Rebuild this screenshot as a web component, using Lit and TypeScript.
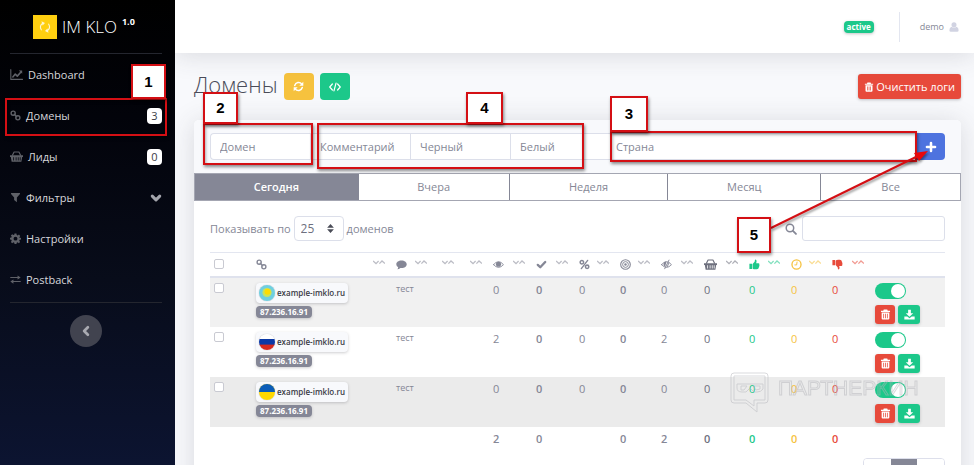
import { LitElement, html, css, svg, nothing } from "lit";
import { customElement, state } from "lit/decorators.js";
import { classMap } from "lit/directives/class-map.js";
import { styleMap } from "lit/directives/style-map.js";

const line = (d: string, w = 1.5) =>
  svg`<path d=${d} fill="none" stroke="currentColor" stroke-width=${w} stroke-linecap="round" stroke-linejoin="round"/>`;
const fill = (d: string) => svg`<path d=${d} fill="currentColor" fill-rule="evenodd"/>`;

const glyphs: Record<string, unknown> = {
  chart: svg`${line("M1 2V14H15.5", 1.3)}${line("M3.5 11L6.5 7.5L9 10L13.5 5", 2)}${fill("M10.8 3H15V7.2Z")}`,
  link: svg`<circle cx="4.6" cy="4.6" r="3" fill="none" stroke="currentColor" stroke-width="2"/><circle cx="11.4" cy="11.4" r="3" fill="none" stroke="currentColor" stroke-width="2"/>${line("M6.2 6.2L9.8 9.8", 2)}`,
  basket: svg`${fill("M0 6.5H16V8.5H15L14 14.5H2L1 8.5H0ZM4 9V13H5V9ZM7 9V13H8V9ZM9.6 9V13H10.6V9ZM12 9V13H13V9Z")}${line("M3 6.5L5 2.5H11L13 6.5", 1.4)}`,
  filter: fill("M1.5 1.5H14.5V3L10 8V14.8L6 11.5V8L1.5 3Z"),
  gear: svg`${fill("M6.6 .8H9.4L9.8 2.9L11.2 3.5L13 2.3L14.9 4.2L13.7 6L14.2 7.2L16 7V9.6L14 9.9L13.4 11.2L14.7 13L12.8 14.9L11 13.6L9.8 14.1L9.4 16H6.6L6.2 14.1L5 13.6L3.2 14.9L1.3 13L2.5 11.2L2 9.9L0 9.6V7L2 6.6L2.5 5.4L1.3 3.7L3.2 1.8L5 3L6.2 2.6ZM8 5.4A2.8 2.8 0 1 0 8 11A2.8 2.8 0 1 0 8 5.4Z")}`,
  swap: svg`${line("M1 5H12M15 11H4", 1.6)}${fill("M11 2L15.5 5L11 8ZM5 8L.5 11L5 14Z")}`,
  down: line("M3 5.5L8 10.5L13 5.5", 4),
  left: line("M10.5 3L5.5 8L10.5 13", 3.6),
  refresh: svg`${line("M2.5 6.5A5.8 5.8 0 0 1 12.8 4.6M13.5 9.5A5.8 5.8 0 0 1 3.2 11.4", 2.2)}${fill("M15 1.2V7H9.2ZM1 14.8V9H6.8Z")}`,
  cycle: svg`${line("M3.8 11.2C2 8.6 2.6 5.6 5 4M12.2 4.8C14 7.4 13.4 10.4 11 12", 1.3)}${fill("M4 1.4L8 3.4L5.2 6.4ZM12 14.6L8 12.6L10.8 9.6Z")}`,
  code: line("M4.5 4L1 8L4.5 12M11.5 4L15 8L11.5 12M9.4 2.8L6.6 13.2", 1.6),
  trash: fill("M5.5 .8H10.5L11.3 2.6H14.6V4.4H1.4V2.6H4.7ZM2.4 5.2H13.6V13.8Q13.6 15.4 12 15.4H4Q2.4 15.4 2.4 13.8ZM4.8 7V13.4H5.9V7ZM7.5 7V13.4H8.6V7ZM10.1 7V13.4H11.2V7Z"),
  download: fill("M6 1H10V6H13.4L8 11.4L2.6 6H6ZM.5 11H4.8L8 13.6L11.2 11H15.5V15.2H.5Z"),
  plus: line("M8 2.6V13.4M2.6 8H13.4", 3.4),
  user: fill("M8 .5A4 4 0 0 1 8 8.6A4 4 0 0 1 8 .5ZM4 7.6Q8 11 12 7.6Q15.4 8.6 15.4 13Q15.4 15.5 13 15.5H3Q.6 15.5 .6 13Q.6 8.6 4 7.6Z"),
  comment: fill("M8 2C12.4 2 15.6 4.4 15.6 7.6S12.4 13.2 8 13.2L6.4 13.1Q4.6 14.8 1.8 15Q3 13.8 3.2 12Q.4 10.4 .4 7.6C.4 4.4 3.6 2 8 2Z"),
  eye: svg`${line("M.8 8.2Q8 -.6 15.2 8.2Q8 16.4 .8 8.2Z", 1.3)}<circle cx="8" cy="7.6" r="3.7" fill="currentColor"/>`,
  eyeoff: svg`${line("M.8 8.2Q8 -.6 15.2 8.2Q8 16.4 .8 8.2Z", 1.3)}<path d="M8 3.9A3.7 3.7 0 0 0 6 11Z" fill="currentColor"/>${line("M11.6 1.6L5.4 14.2M11.4 6L9 11.4", 1.4)}`,
  check: line("M2.6 8.6L6.2 12L13.4 4.4", 3.4),
  percent: svg`<circle cx="4.2" cy="4.6" r="2.5" fill="none" stroke="currentColor" stroke-width="2.2"/><circle cx="11.8" cy="11.4" r="2.5" fill="none" stroke="currentColor" stroke-width="2.2"/>${line("M12.6 2L3.4 14", 2)}`,
  target: svg`<circle cx="8" cy="8" r="7" fill="none" stroke="currentColor" stroke-width="1.6"/><circle cx="8" cy="8" r="4.2" fill="none" stroke="currentColor" stroke-width="1.4"/><circle cx="8" cy="8" r="1.8" fill="currentColor"/>`,
  up: fill("M.6 7H4.4V14.6H.6ZM5.2 7.2L8.2 4L8.8 .8Q11.4 .8 11 3.6L10.4 6H14Q15.6 6.4 15 8.4Q15.6 9.4 14.8 10.4Q15 11.6 14.2 12.4Q14.2 15 11.4 15H9Q7 14.8 5.2 14Z"),
  clock: svg`<circle cx="8" cy="8" r="6.6" fill="none" stroke="currentColor" stroke-width="1.9"/>${line("M8.8 4.4L8.2 8.6H5.6", 1.4)}`,
  thumbdown: fill("M.6 9H4.4V1.4H.6ZM5.2 8.8L8.2 12L8.8 15.2Q11.4 15.2 11 12.4L10.4 10H14Q15.6 9.6 15 7.6Q15.6 6.6 14.8 5.6Q15 4.4 14.2 3.6Q14.2 1 11.4 1H9Q7 1.2 5.2 2Z"),
  search: svg`<circle cx="6.6" cy="6.6" r="5" fill="none" stroke="currentColor" stroke-width="2"/>${line("M10.6 10.6L14.6 14.6", 2.4)}`,
  updown: fill("M8 0L14 6.8H2ZM8 16L2 9.2H14Z"),
};

const icon = (name: string, size = 12) =>
  html`<svg class="icon" viewBox="0 0 16 16" width=${size} height=${size} aria-hidden="true">${glyphs[name]}</svg>`;

const flags: Record<string, unknown> = {
  kz: svg`<rect width="16" height="16" fill="#6fcfe0"/><circle cx="8" cy="7.5" r="4.6" fill="#c9e35c"/><circle cx="8.5" cy="6.8" r="3" fill="#ffdc00"/>`,
  ru: svg`<rect width="16" height="16" fill="#fff"/><rect y="5" width="16" height="6" fill="#0b39a6"/><rect y="10.6" width="16" height="6" fill="#d62a1e"/>`,
  ua: svg`<rect width="16" height="16" fill="#ffd800"/><rect width="16" height="8" fill="#0a5cb8"/>`,
};

interface Column {
  w: number;
  icon?: string;
  sort?: boolean;
  tone?: string;
  label: string;
}

const columns: Column[] = [
  { w: 36, label: "" },
  { w: 140, icon: "link", sort: true, label: "Домен" },
  { w: 42, icon: "comment", sort: true, label: "Комментарий" },
  { w: 27, sort: true, label: "Черный" },
  { w: 28, sort: true, label: "Белый" },
  { w: 43, icon: "eye", sort: true, label: "Просмотры" },
  { w: 43, icon: "check", sort: true, tone: "strong", label: "Пропущено" },
  { w: 41, icon: "percent", sort: true, label: "Процент" },
  { w: 41, icon: "target", sort: true, tone: "strong", label: "Цели" },
  { w: 43, icon: "eyeoff", sort: true, label: "Скрыто" },
  { w: 45, icon: "basket", sort: true, tone: "dark", label: "Лиды" },
  { w: 42, icon: "up", sort: true, tone: "green", label: "Принято" },
  { w: 41, icon: "clock", sort: true, tone: "amber", label: "Ожидание" },
  { w: 43, icon: "thumbdown", sort: true, tone: "red", label: "Отклонено" },
  { w: 80, label: "" },
];

const rows = [
  { flag: "kz", values: [0, 0, 0, 0, 0, 0, 0, 0, 0] },
  { flag: "ru", values: [2, 0, 0, 0, 2, 0, 0, 0, 0] },
  { flag: "ua", values: [0, 0, 0, 0, 0, 0, 0, 0, 0] },
];
const totals = ["2", "0", "", "0", "2", "0", "0", "0", "0"];

const menu = [
  { icon: "chart", text: "Dashboard" },
  { icon: "link", text: "Домены", count: 3 },
  { icon: "basket", text: "Лиды", count: 0 },
  { icon: "filter", text: "Фильтры", more: true },
  { icon: "gear", text: "Настройки" },
  { icon: "swap", text: "Postback" },
];

/* Tour marks: x, y, width, height of the numbered tag and of the area it names */
const marks = [
  { n: 1, tag: [131, 64, 35, 35], area: [5, 98, 162, 38] },
  { n: 2, tag: [203, 92, 35, 32], area: [203, 123, 110, 42] },
  { n: 3, tag: [610, 96, 38, 36], area: [610, 131, 307, 31] },
  { n: 4, tag: [466, 92, 37, 32], area: [317, 123, 267, 46] },
  { n: 5, tag: [737, 217, 34, 36] },
];

const box = ([x, y, w, h]: number[]) =>
  styleMap({ left: `${x}px`, top: `${y}px`, width: `${w}px`, height: `${h}px` });

@customElement("app-root")
export class AppRoot extends LitElement {
  @state() private period = 0;

  static styles = css`
    :host {
      display: block;
      position: relative;
      height: 100vh;
      overflow: hidden;
      font-family: "Open Sans", "Noto Sans", sans-serif;
      font-size: 11px;
      line-height: 16px;
      color: #858796;
    }
    * { box-sizing: border-box; }
    button, input, select { font: inherit; color: inherit; margin: 0; }
    button { border: 0; padding: 0; cursor: pointer; display: inline-flex; align-items: center; justify-content: center; }
    a { color: inherit; text-decoration: none; }
    .icon { display: block; flex: none; }
    .app { display: flex; height: 100%; }

    .side {
      flex: none; width: 175px; padding: 0 13px 0 10px;
      background: linear-gradient(#000 0%, #02030a 25%, #080c1a 60%, #0c1431 100%);
      color: #d6d7db;
    }
    .brand { display: flex; align-items: center; height: 53px; padding-left: 23px; gap: 5px; color: #fff; font-size: 17px; font-weight: 300; }
    .logo { display: grid; place-items: center; width: 24px; height: 24px; background: #ffcf10; color: #fff6d0; }
    .ver { font-size: 9px; font-weight: 700; line-height: 10px; align-self: flex-start; margin-top: 17px; }
    .menu { list-style: none; margin: 0; padding: 0 0 2px; border: solid #24262f; border-width: 1px 0; }
    .item { display: flex; align-items: center; gap: 5px; height: 41px; }
    .item .icon { color: #5f6168; }
    .item .more .icon { color: #a3a5ac; }
    .item .more { margin-left: auto; }
    .count { margin-left: auto; min-width: 15px; height: 16px; border-radius: 4px; background: #fff; color: #3a3b45; text-align: center; }
    .fold { display: flex; margin: 12px auto 0; width: 32px; height: 32px; border-radius: 50%; background: #41434f; color: #a9aab1; }

    .main { flex: 1; min-width: 0; background: #f8f9fc; overflow: hidden; }
    .top {
      position: relative; display: flex; align-items: center; justify-content: flex-end; height: 53px; padding-right: 15px;
      background: #fff; box-shadow: 0 2px 26px rgba(58, 59, 69, 0.17); font-size: 9px;
    }
    .active { padding: 0 3px; height: 12px; line-height: 12px; font-size: 8px; border-radius: 4px; background: #1cc88a; color: #fff; font-weight: 700; box-shadow: 0 1px 3px rgba(58, 59, 69, 0.3); }
    .rule { width: 1px; height: 30px; margin: 0 20px 0 25px; background: #e3e6f0; }
    .who { display: flex; align-items: center; gap: 5px; }
    .who .icon { color: #d1d3e2; }
    .body { padding: 20px 13px 0 19px; }
    .head { display: flex; align-items: center; height: 27px; margin-bottom: 20px; }
    h1 { margin: 0 6px 0 0; font-size: 22px; line-height: 24px; height: 30px; font-weight: 300; color: #4a4c59; }
    .sq { width: 30px; height: 27px; border-radius: 4px; color: #fff; margin-right: 6px; }
    .amberbg { background: #f6c23e; }
    .greenbg { background: #1cc88a; }
    .redbg { background: #e74a3b; }
    .clear { margin-left: auto; height: 25px; padding: 0 6px; gap: 2px; border-radius: 3px; color: #fff; box-shadow: 0 1px 3px rgba(58, 59, 69, 0.3); }

    .card { background: #fff; border-radius: 5px; box-shadow: 0 2px 26px rgba(58, 59, 69, 0.17); padding-bottom: 16px; }
    .add { display: grid; grid-template-columns: repeat(4, 100fr) 306fr 29px; padding: 13px 16px; height: 53px; background: #f8f9fc; border-radius: 5px 5px 0 0; }
    .add input, .find input, .per select { min-width: 0; border: 1px solid #dcdfea; background: #fff; outline: 0; }
    .add input { width: 100%; height: 27px; padding: 0 9px; border-right-width: 0; border-radius: 0; }
    .add input:first-child { border-radius: 4px 0 0 4px; }
    .add .country { padding: 0 5px; }
    .add button { background: #4e73df; color: #fff; border-radius: 0 4px 4px 0; height: 27px; }
    input::placeholder { color: #858796; opacity: 1; }
    .tabs { display: grid; grid-template-columns: 163fr 151fr 159fr 153fr 140fr; border: 1px solid #a4a6b2; }
    .tabs button { min-width: 0; height: 26px; background: #fff; border-left: 1px solid #858796; }
    .tabs button:first-child { border-left: 0; }
    .tabs .on { background: #858796; color: #fff; font-weight: 600; }
    .inner { padding: 15px 16px 0; }
    .tools { display: flex; align-items: center; justify-content: space-between; height: 25px; }
    .per, .find { display: flex; align-items: center; gap: 3px; }
    .pick { position: relative; display: block; color: #6e707e; font-size: 12px; }
    .pick .icon { position: absolute; right: 9px; top: 8px; color: #4a4c57; }
    .per select { display: block; appearance: none; width: 50px; height: 25px; padding: 0 6px; border-radius: 4px; }
    .find { gap: 5px; }
    .find input { width: 143px; height: 25px; border-radius: 3px; padding: 0 6px; }

    table { width: 100%; margin-top: 11px; table-layout: fixed; border-collapse: collapse; }
    th { height: 24px; padding: 0; border-top: 1px solid #e3e6f0; border-bottom: 2px solid #dfe2ed; text-align: left; }
    td { padding: 5px 0 0 10px; vertical-align: top; line-height: 14px; }
    .th { display: flex; align-items: center; justify-content: space-between; padding-left: 10px; height: 22px; }
    .sort { margin: 0 1px 4px auto; opacity: 0.55; }
    th:first-child, td:first-child { padding-left: 4px; }
    th:first-child .th { padding: 0; }
    .row { height: 50px; }
    .row:nth-child(1) { background: #f1f1f1; }
    .row:nth-child(3) { background: #ebebeb; }
    .cb { display: block; appearance: none; width: 10px; height: 10px; border: 1px solid #c9cad2; border-radius: 2px; background: #fff; }
    .cell { display: flex; flex-direction: column; align-items: flex-start; gap: 3px; }
    .site { display: flex; align-items: center; gap: 2px; height: 20px; padding: 0 3px; border-radius: 4px; background: #f8f9fc; color: #3a3b45; font-size: 8px; font-weight: 600; white-space: nowrap; box-shadow: 0 1px 3px rgba(58, 59, 69, 0.25); }
    .flag { display: block; border-radius: 50%; flex: none; box-shadow: 0 0 1px rgba(0, 0, 0, 0.4); }
    .ip { padding: 0 4px; height: 12px; line-height: 12px; border-radius: 4px; background: #858796; color: #fff; font-size: 8px; font-weight: 700; box-shadow: 0 1px 3px rgba(58, 59, 69, 0.25); }
    .note { font-size: 9px; line-height: 12px; }
    .strong { font-weight: 600; }
    .dark { color: #6e707e; }
    .green { color: #1cc88a; }
    .amber { color: #f6c23e; }
    .red { color: #e74a3b; }
    tfoot td { font-weight: 600; }
    .toggle { display: block; position: relative; appearance: none; width: 31px; height: 16px; border-radius: 8px; background: #1cc88a; }
    .toggle::after { content: ""; position: absolute; right: 1px; top: 1px; width: 14px; height: 14px; border-radius: 50%; background: #fff; }
    .acts { display: flex; gap: 3px; margin-top: 6px; }
    .acts button { width: 20px; height: 19px; border-radius: 3px; color: #fff; box-shadow: 0 1px 3px rgba(58, 59, 69, 0.25); }
    .acts .greenbg { width: 22px; }
    .pages { display: flex; width: 82px; margin: 12px 0 0 auto; border: 1px solid #dddfeb; border-radius: 4px; overflow: hidden; }
    .pages button { flex: 1; height: 26px; background: #fff; }
    .pages .on { background: #858796; color: #fff; }

    .over { position: absolute; inset: 0; pointer-events: none; }
    .tag, .area { position: absolute; border: 2px solid #d40f14; box-shadow: 1px 2px 3px rgba(0, 0, 0, 0.45); }
    .tag { display: grid; place-items: center; background: #fff; color: #000; font: 700 15px/18px "Liberation Sans", Arial, sans-serif; }
    .area { box-shadow: 1px 2px 3px rgba(0, 0, 0, 0.45), inset 1px 2px 3px rgba(0, 0, 0, 0.3); }
    .arrow { position: absolute; left: 0; top: 0; filter: drop-shadow(1px 2px 1px rgba(0, 0, 0, 0.4)); }
    .mark { position: absolute; left: 730px; top: 372px; display: flex; align-items: flex-start; gap: 8px; opacity: 0.5; }
    .word { margin-top: 4px; font: 400 21px/24px "Liberation Sans", Arial, sans-serif; color: transparent; -webkit-text-stroke: 1px #b4b5ba; }
  `;

  private sortMark() {
    return html`<svg class="sort" width="12" height="5" viewBox="0 0 12 5" aria-hidden="true">
      <path d="M0 1L3 3.6L5.6 1M6.4 3.6L9 1L12 3.6" fill="none" stroke="currentColor" stroke-width="1.3" />
    </svg>`;
  }

  private side() {
    return html`<nav class="side">
      <a class="brand" href="#"><span class="logo">${icon("cycle", 14)}</span>IM KLO<span class="ver">1.0</span></a>
      <ul class="menu">
        ${menu.map(
          (m) => html`<li>
            <a class="item" href="#">
              ${icon(m.icon, m.icon === "basket" || m.icon === "chart" ? 13 : 11)}<span>${m.text}</span>
              ${m.count !== undefined ? html`<span class="count">${m.count}</span>` : nothing}
              ${m.more ? html`<span class="more">${icon("down", 12)}</span>` : nothing}
            </a>
          </li>`
        )}
      </ul>
      <button class="fold" aria-label="Свернуть">${icon("left", 12)}</button>
    </nav>`;
  }

  private table() {
    return html`<table>
      <colgroup>${columns.map((c) => html`<col style=${styleMap({ width: `${c.w}px` })} />`)}</colgroup>
      <thead>
        <tr>
          ${columns.map(
            (c, i) => html`<th scope="col" aria-label=${c.label || nothing}>
              <div class="th ${c.tone ?? ""}">
                ${i === 0 ? html`<input class="cb" type="checkbox" aria-label="Выбрать все" />` : nothing}
                ${c.icon ? icon(c.icon, c.icon === "basket" ? 13 : 11) : nothing}${c.sort ? this.sortMark() : nothing}
              </div>
            </th>`
          )}
        </tr>
      </thead>
      <tbody>
        ${rows.map(
          (r) => html`<tr class="row">
            <td><input class="cb" type="checkbox" aria-label="Выбрать домен" /></td>
            <td>
              <div class="cell">
                <a class="site" href="#"
                  ><svg class="flag" viewBox="0 0 16 16" width="16" height="16" aria-hidden="true">${flags[r.flag]}</svg
                  >example-imklo.ru</a
                ><span class="ip">87.236.16.91</span>
              </div>
            </td>
            <td class="note">тест</td>
            <td></td>
            <td></td>
            ${r.values.map((v, i) => html`<td class=${columns[i + 5].tone ?? ""}>${v}</td>`)}
            <td>
              <input class="toggle" type="checkbox" checked aria-label="Включен" />
              <div class="acts">
                <button class="redbg" aria-label="Удалить">${icon("trash", 11)}</button
                ><button class="greenbg" aria-label="Скачать">${icon("download", 11)}</button>
              </div>
            </td>
          </tr>`
        )}
      </tbody>
      <tfoot>
        <tr>
          <td colspan="5"></td>
          ${totals.map((v, i) => html`<td class=${columns[i + 5].tone ?? ""}>${v}</td>`)}
          <td></td>
        </tr>
      </tfoot>
    </table>`;
  }

  private overlay() {
    return html`<div class="over">
      <div class="mark">
        <svg width="40" height="42" viewBox="0 0 40 42" fill="none" stroke="#b4b5ba" aria-hidden="true">
          <path d="M4 1H35Q38 1 38 4V28Q38 31 35 31H27V40L16 31H4Q1 31 1 28V4Q1 1 4 1Z" />
          <path d="M4 4H35V28H24V34L16 28H4Z M7 12H33V17Q31 20 27 20H24L20 16L16 20H12Q7 20 7 16ZM11 14H17L14 18H11ZM23 14H30V17L26 18Z" />
        </svg>
        <span class="word">ПАРТНЕРКИН</span>
      </div>
      ${marks.map((m) => (m.area ? html`<div class="area" style=${box(m.area)}></div>` : nothing))}
      <svg class="arrow" width="974" height="300" viewBox="0 0 974 300" aria-hidden="true">
        <path d="M771 228L918 156" stroke="#d40f14" stroke-width="2" />
        <path d="M928 151L914 153L919 161Z" fill="#e8080c" />
      </svg>
      ${marks.map((m) => html`<div class="tag" style=${box(m.tag)}>${m.n}</div>`)}
    </div>`;
  }

  render() {
    return html`<div class="app">
        ${this.side()}
        <main class="main">
          <header class="top">
            <span class="active">active</span><span class="rule"></span>
            <a class="who" href="#">demo ${icon("user", 10)}</a>
          </header>
          <div class="body">
            <div class="head">
              <h1>Домены</h1>
              <button class="sq amberbg" aria-label="Обновить">${icon("refresh", 11)}</button>
              <button class="sq greenbg" aria-label="Код">${icon("code", 12)}</button>
              <button class="clear redbg">${icon("trash", 10)}Очистить логи</button>
            </div>
            <section class="card">
              <form class="add">
                ${["Домен", "Комментарий", "Черный", "Белый"].map(
                  (p) => html`<input type="text" placeholder=${p} aria-label=${p} />`
                )}
                <input class="country" type="text" placeholder="Страна" aria-label="Страна" />
                <button type="button" aria-label="Добавить">${icon("plus", 12)}</button>
              </form>
              <div class="tabs">
                ${["Сегодня", "Вчера", "Неделя", "Месяц", "Все"].map(
                  (t, i) => html`<button class=${classMap({ on: i === this.period })} @click=${() => (this.period = i)}>${t}</button>`
                )}
              </div>
              <div class="inner">
                <div class="tools">
                  <label class="per">
                    Показывать по
                    <span class="pick"><select><option>25</option><option>50</option></select>${icon("updown", 9)}</span>
                    доменов
                  </label>
                  <label class="find">${icon("search", 12)}<input type="search" aria-label="Поиск" /></label>
                </div>
                ${this.table()}
                <div class="pages">
                  <button aria-label="Назад"></button><button class="on" aria-label="Страница 1"></button><button aria-label="Вперед"></button>
                </div>
              </div>
            </section>
          </div>
        </main>
      </div>
      ${this.overlay()}`;
  }
}
